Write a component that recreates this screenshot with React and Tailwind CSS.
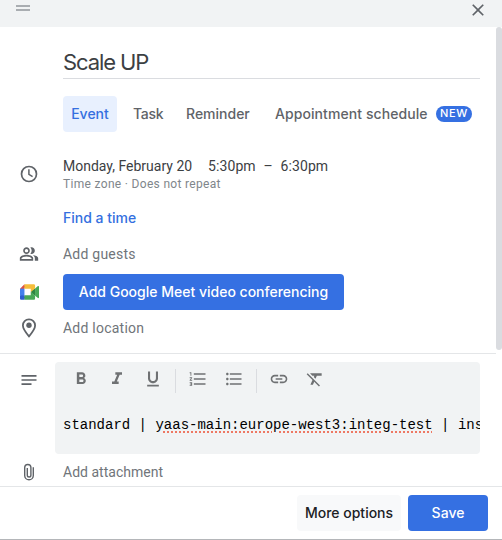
import React from "react";
import {
  MdOutlinePeopleAlt,
  MdNotes,
  MdFormatBold,
  MdFormatItalic,
  MdFormatUnderlined,
  MdFormatListNumbered,
  MdFormatListBulleted,
  MdInsertLink,
  MdFormatClear,
  MdClose,
} from "react-icons/md";

function ClockIcon() {
  return (
    <svg viewBox="0 0 20 20" fill="none" stroke="currentColor" className="h-5 w-5">
      <circle cx="10" cy="10" r="7.5" strokeWidth="1.7" />
      <path d="M9.9 5.3v5l3.7 2.3" strokeWidth="1.5" />
    </svg>
  );
}

function PinIcon() {
  return (
    <svg viewBox="0 0 16 20" fill="none" className="h-5 w-4">
      <path
        d="M8 1.4c-3.5 0-6.1 2.6-6.1 6 0 3.5 3 7.2 6.1 10.9 3.1-3.7 6.1-7.4 6.1-10.9 0-3.4-2.6-6-6.1-6z"
        stroke="currentColor"
        strokeWidth="1.8"
      />
      <circle cx="8" cy="7.3" r="2.7" fill="currentColor" />
    </svg>
  );
}

function ClipIcon() {
  return (
    <svg viewBox="0 0 12 18" fill="none" stroke="currentColor" strokeWidth="1.4" className="h-[18px] w-3">
      <path d="M10.3 4.2v8.2a4.3 4.3 0 0 1-8.6 0V4.6a3.1 3.1 0 0 1 6.2 0v7.6a1.8 1.8 0 0 1-3.6 0V5" />
    </svg>
  );
}

function MeetLogo() {
  return (
    <svg viewBox="0 0 87.5 72" className="h-[16px] w-[19px]">
      <path fill="#2f8542" d="M49.5 36l8.53 9.75 11.47 7.33 2-17.02-2-16.64-11.69 6.44z" />
      <path fill="#2c5fcf" d="M0 51.5V66c0 3.315 2.685 6 6 6h14.5l3-10.96-3-9.54-9.95-3z" />
      <path fill="#dd5144" d="M20.5 0L0 20.5l10.55 3 9.95-3 2.95-9.41z" />
      <path fill="#4380ed" d="M20.5 20.5H0v31h20.5z" />
      <path
        fill="#48a857"
        d="M82.6 8.68L69.5 19.42v33.66l13.16 10.79c1.97 1.54 4.85.135 4.85-2.37V11c0-2.535-2.945-3.925-4.91-2.32zM49.5 36v15.5h-29V72h43c3.315 0 6-2.685 6-6V53.08z"
      />
      <path fill="#f5bd3b" d="M63.5 0h-43v20.5h29V36l20-16.57V6c0-3.315-2.685-6-6-6z" />
    </svg>
  );
}

function Row({ icon, className, children }) {
  return (
    <div className={`flex items-center ${className}`}>
      <div className="flex w-[58px] shrink-0 justify-center text-[#5f6368]">{icon}</div>
      <div className="ml-[5px] flex items-center">{children}</div>
    </div>
  );
}

function Tool({ icon: Icon }) {
  return (
    <button className="flex h-[34px] w-9 items-center justify-center">
      <Icon size={20} />
    </button>
  );
}

export default function App() {
  return (
    <div className="flex h-[540px] w-[502px] flex-col overflow-hidden border-b border-[#b4b6b9] bg-white font-['Roboto',sans-serif] text-sm text-[#3c4043]">
      <header className="flex h-[27px] shrink-0 items-start justify-between bg-[#f1f3f4] pl-4 pr-[14px]">
        <div className="mt-[5px] flex w-[14px] flex-col gap-[2px]">
          <span className="h-[2px] bg-[#a9adb1]" />
          <span className="h-[2px] bg-[#a9adb1]" />
        </div>
        <MdClose size={20} className="text-[#5f6368]" />
      </header>

      <main className="flex h-[459px] shrink-0 justify-between">
        <div className="flex w-[496px] flex-col">
          <div className="ml-[63px] mt-[20px] flex h-[32px] w-[417px] shrink-0 items-center border-b border-[#dadce0] pt-px font-['Inter',sans-serif] text-[22px] tracking-[-1.1px]">
            Scale UP
          </div>

          <nav className="ml-[63px] mt-[17px] flex h-9 shrink-0 items-center whitespace-nowrap font-['Inter',sans-serif] font-medium text-[#5f6368]">
            <span className="flex h-9 w-[54px] items-center justify-center rounded bg-[#e8f0fe] text-[#346fe0]">Event</span>
            <span className="ml-4 w-[53px] tracking-[-0.3px]">Task</span>
            <span className="w-[89px]">Reminder</span>
            <span className="w-[161px] tracking-[0.08px]">Appointment schedule</span>
            <span className="flex h-4 w-9 items-center justify-center rounded-full bg-[#3570e2] text-[11px] tracking-[0.7px] text-white">
              NEW
            </span>
          </nav>

          <Row className="mt-[24px] h-9" icon={<ClockIcon />}>
            <div>
              <div className="flex h-5 items-center whitespace-nowrap">
                <span className="w-[145px]">Monday, February 20</span>
                <span className="w-[55.5px] tracking-[0.1px]">5:30pm</span>
                <span className="w-[17px]">–</span>
                <span className="tracking-[0.1px]">6:30pm</span>
              </div>
              <div className="h-4 text-xs leading-4 tracking-[0.32px] text-[#80868b]">Time zone · Does not repeat</div>
            </div>
          </Row>

          <div className="ml-[63px] mt-[16px] h-5 shrink-0 font-['Inter',sans-serif] font-medium leading-5 text-[#346fe0]">
            Find a time
          </div>

          <Row className="mt-[16px] h-5 tracking-[0.23px] text-[#70757a]" icon={<MdOutlinePeopleAlt size={20} />}>
            Add guests
          </Row>
          <Row className="mt-[10px] h-9" icon={<MeetLogo />}>
            <button className="h-9 w-[281px] whitespace-nowrap rounded bg-[#3570e2] font-['Inter',sans-serif] font-medium text-white">
              Add Google Meet video conferencing
            </button>
          </Row>
          <Row className="mt-[8px] h-5 tracking-[0.23px] text-[#70757a]" icon={<PinIcon />}>
            Add location
          </Row>

          <hr className="mt-[15px] border-[#e4e6e8]" />

          <div className="mt-2 flex h-[92px] shrink-0">
            <div className="flex w-[55px] shrink-0 justify-center pl-[3px] pt-[8px] text-[#5f6368]">
              <MdNotes size={20} />
            </div>
            <div className="w-[425px] overflow-hidden rounded bg-[#f1f3f4]">
              <div className="flex h-[34px] items-center pl-2 text-[#6f7173]">
                <Tool icon={MdFormatBold} />
                <Tool icon={MdFormatItalic} />
                <Tool icon={MdFormatUnderlined} />
                <span className="mx-1 mt-1 h-6 w-px bg-[#dadce0]" />
                <Tool icon={MdFormatListNumbered} />
                <Tool icon={MdFormatListBulleted} />
                <span className="mx-1 mt-1 h-6 w-px bg-[#dadce0]" />
                <Tool icon={MdInsertLink} />
                <Tool icon={MdFormatClear} />
              </div>
              <div className="mt-[19px] whitespace-pre pl-2 font-['Liberation_Mono',monospace] text-sm leading-5 text-black">
                standard |{" "}
                <span className="underline decoration-[#ee7863] decoration-dotted decoration-2 underline-offset-2">
                  yaas-main:europe-west3:integ-test
                </span>{" "}
                | ins
              </div>
            </div>
          </div>

          <Row className="mt-[8px] h-5 text-[#70757a]" icon={<ClipIcon />}>
            <span className="tracking-[0.02px]">Add attachment</span>
          </Row>
        </div>
        <div className="h-[323px] w-[6px] rounded-[3px] bg-[#dadce0]" />
      </main>

      <footer className="flex h-[53px] shrink-0 items-start justify-end gap-[7px] border-t border-[#e4e6e8] pr-[14px] pt-2 font-['Inter',sans-serif] font-medium">
        <button className="h-9 w-[104px] whitespace-nowrap rounded bg-[#f8f9fa] text-[#202124]">More options</button>
        <button className="h-9 w-20 rounded bg-[#3570e2] text-white">Save</button>
      </footer>
    </div>
  );
}
